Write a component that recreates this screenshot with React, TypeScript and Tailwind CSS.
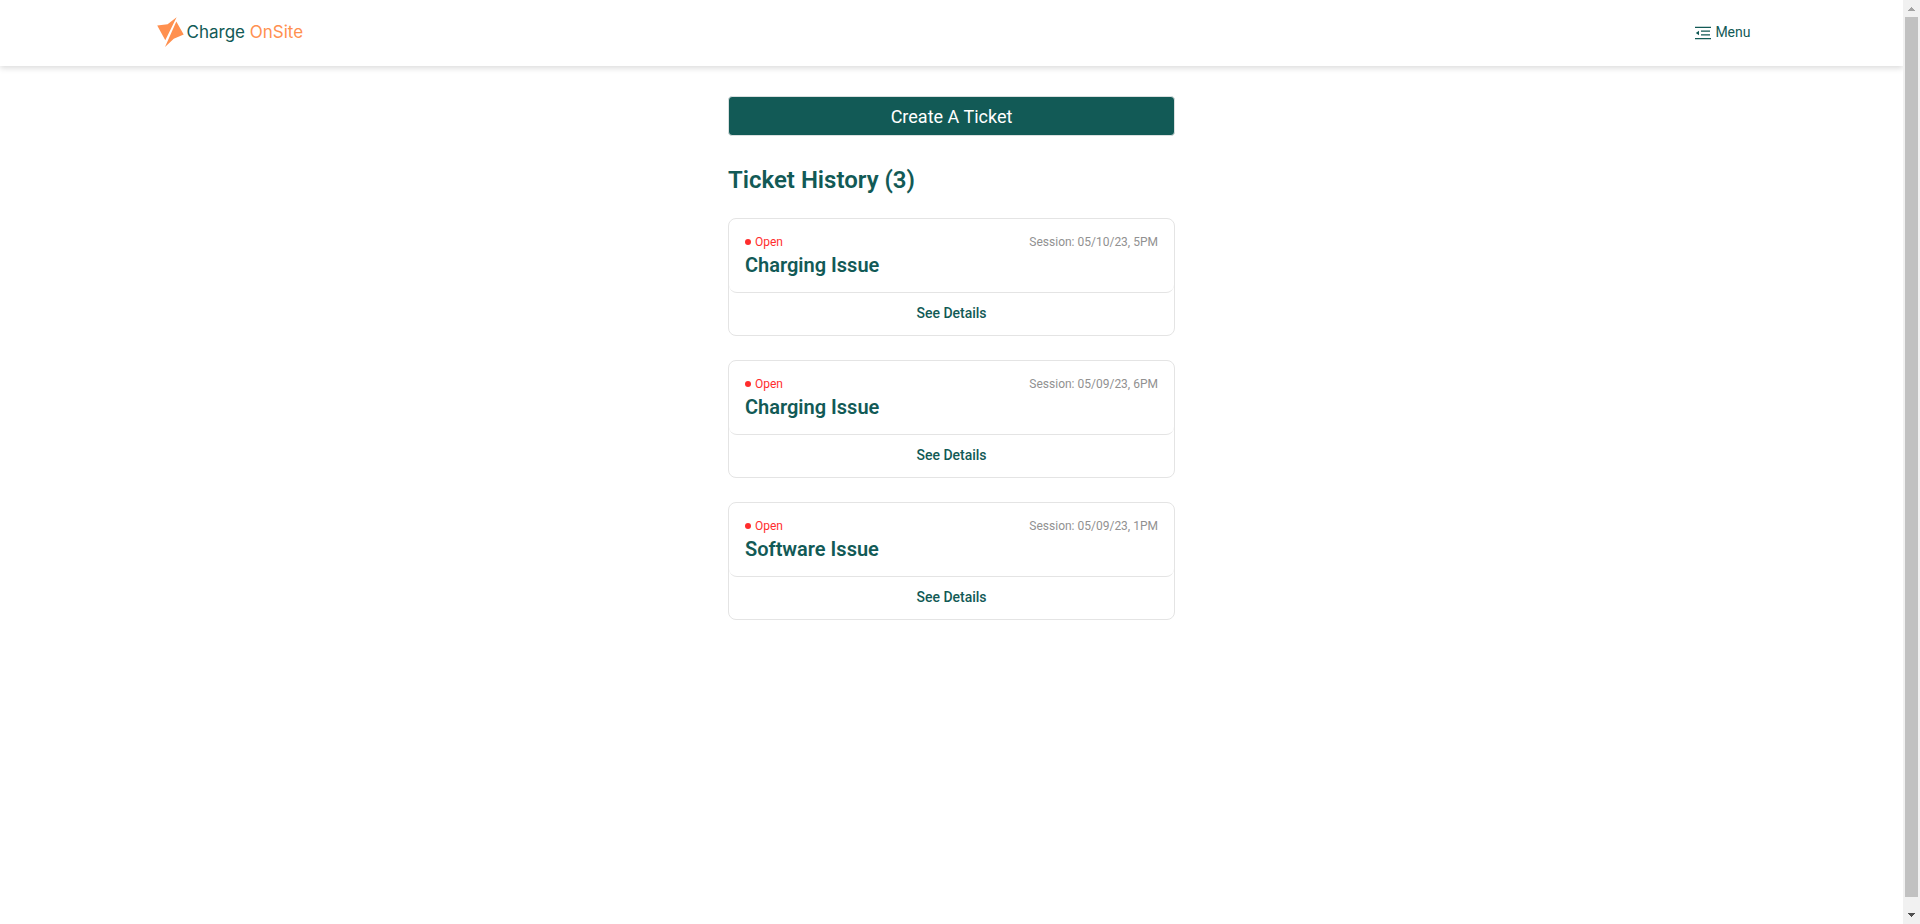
const tickets = [
  { id: 1, title: "Charging Issue", session: "05/10/23, 5PM" },
  { id: 2, title: "Charging Issue", session: "05/09/23, 6PM" },
  { id: 3, title: "Software Issue", session: "05/09/23, 1PM" },
];

function Logo() {
  return (
    <a href="#home" className="flex items-center gap-[3px] pb-0.5 font-['Inter',sans-serif] text-[17px] leading-6 text-[#125a56]">
      <svg width="27" height="30" viewBox="0 0 27 30" fill="#ff904f" aria-hidden="true">
        <path d="M19.600 0.200 8.300 23.200 0.200 8.500 10.600 7.200z" />
        <path d="M19.300 4.500 26.700 17.600 16.800 21.800 8 30z" />
      </svg>
      <span>
        Charge <span className="text-[#ff904f]">OnSite</span>
      </span>
    </a>
  );
}

function MenuIcon() {
  return (
    <svg width="16" height="14" viewBox="0 0 16 14" fill="#125a56" aria-hidden="true">
      <path d="M0 .7h16V2H0zM6 4.400h9v1.300H6zM6 8.300h9v1.300H6zM0 12h16v1.300H0zM.8 7 4 4.700v4.600z" />
    </svg>
  );
}

function TicketCard({ title, session }: { title: string; session: string }) {
  return (
    <li className="rounded-lg border border-[#e4e4e4]">
      <div className="h-[74px] rounded-lg border-b border-[#e4e4e4] px-4 pt-[15px]">
        <div className="flex items-center justify-between text-xs leading-4">
          <span className="flex items-center gap-1 text-[#ff2d2d]">
            <span className="size-1.5 rounded-full bg-[#ff2d2d]" />
            Open
          </span>
          <span className="text-[#919191]">Session: {session}</span>
        </div>
        <h2 className="text-xl leading-[30px] font-semibold">{title}</h2>
      </div>
      <button type="button" className="block h-[42px] w-full pb-0.5 text-sm font-medium">
        See Details
      </button>
    </li>
  );
}

function ScrollBar() {
  return (
    <div className="sticky top-0 flex h-screen w-[17px] shrink-0 flex-col items-center justify-between bg-[#f1f1f1]" aria-hidden="true">
      <svg width="17" height="17" viewBox="0 0 17 17" fill="#a3a3a3" shapeRendering="crispEdges">
        <path d="M8 7h1v1h1v1h1v1h1v1H5v-1h1V9h1V8h1z" />
      </svg>
      <div className="w-[13px] flex-1 bg-[#c1c1c1]" />
      <svg width="17" height="27" viewBox="0 0 17 27" fill="#505050" shapeRendering="crispEdges">
        <path d="M5 16h7v1h-1v1h-1v1H9v1H8v-1H7v-1H6v-1H5z" />
      </svg>
    </div>
  );
}

export default function App() {
  return (
    <div className="flex min-h-screen bg-white font-['Roboto',sans-serif] text-[#125a56]">
      <div className="min-w-0 flex-1">
        <header className="shadow-[0_2px_6px_rgba(0,0,0,0.15)]">
          <div className="mx-auto flex h-[66px] max-w-[1600px] items-center justify-between pr-px pl-[5px]">
            <Logo />
            <button type="button" className="flex items-center gap-1 text-sm">
              <MenuIcon />
              <span className="pb-0.5">Menu</span>
            </button>
          </div>
        </header>
        <main className="mx-auto max-w-[447px] pt-[30px]">
          <button type="button" className="block h-10 w-full rounded border border-[#d9dfdf] bg-[#125a56] pt-0.5 text-lg text-white">
            Create A Ticket
          </button>
          <h1 className="mt-7 text-2xl leading-8 font-semibold">Ticket History (3)</h1>
          <ul className="mt-[22px] flex flex-col gap-6">
            {tickets.map((t) => (
              <TicketCard key={t.id} title={t.title} session={t.session} />
            ))}
          </ul>
        </main>
      </div>
      <ScrollBar />
    </div>
  );
}
